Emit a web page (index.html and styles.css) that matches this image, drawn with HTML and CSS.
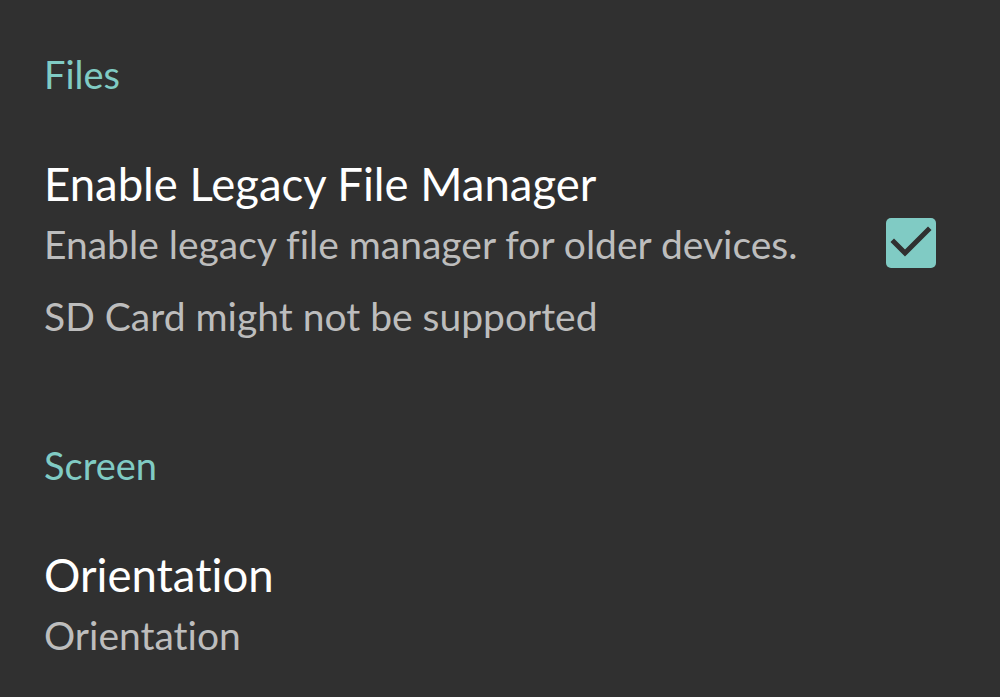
FILE: index.html
```html
<!DOCTYPE html>
<html lang="en">
<head>
 <meta charset="UTF-8">
 <title>Settings</title>
 <link rel="stylesheet" href="styles.css">
</head>
<body>
 <div class="category">Files</div>

 <div class="pref">
 <div class="pref-text">
 <div class="pref-title">Enable Legacy File Manager</div>
 <div class="pref-summary">Enable legacy file manager for older devices.</div>
 <div class="pref-summary">SD Card might not be supported</div>
 </div>
 <div class="checkbox checked">
 <svg viewBox="0 0 50 50" width="50" height="50">
 <path d="M8 24 L19 35 L42 12" fill="none" stroke="#303030" stroke-width="5" stroke-linecap="square"/>
 </svg>
 </div>
 </div>

 <div class="category screen">Screen</div>

 <div class="pref">
 <div class="pref-text">
 <div class="pref-title">Orientation</div>
 <div class="pref-summary">Orientation</div>
 </div>
 </div>
</body>
</html>
```

FILE: styles.css
```css
body {
margin: 0;
padding: 0 64px 0 44px;
background-color: #303030;
font-family: Lato, "Noto Sans", sans-serif;
font-variant-ligatures: none;
}
.category {
color: #80cbc4;
font-size: 38px;
line-height: 44px;
padding-top: 52px;
}
.category.screen {
padding-top: 91px;
}
.pref {
display: flex;
align-items: flex-start;
justify-content: space-between;
}
.pref-text {
padding-top: 64px;
}
.pref-title {
color: #ffffff;
font-size: 45.5px;
line-height: 48px;
}
.pref-summary {
color: #bdbdbd;
font-size: 39px;
line-height: 72px;
}
.checkbox {
width: 50px;
height: 50px;
border-radius: 5px;
background-color: #80cbc4;
margin-top: 122px;
}
.checkbox svg {
display: block;
}
```
